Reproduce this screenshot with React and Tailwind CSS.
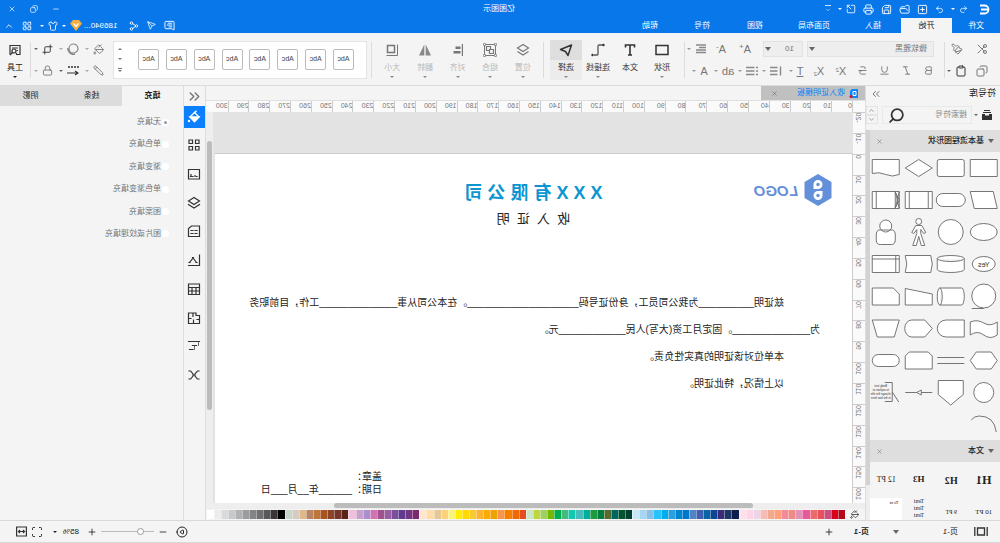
import {
  Bold, ChevronDown, ChevronsLeft, ChevronsRight, ChevronUp, CirclePlay, Clipboard, Copy, Crop, FolderOpen,
  Italic, LayoutGrid, Lock, MessageSquareText, Minus, PaintBucket, Paintbrush, Pencil, Plus, Printer, Redo2,
  Save, Scan, Scissors, Search, Send, Share2, Shirt, SquareArrowOutUpRight, SquarePlus, Strikethrough, Underline,
  Undo2, X,
} from 'lucide-react';

const tabs = ['文件', '开始', '插入', '页面布局', '视图', '符号', '帮助'];
const tabWidths = ['w-12', 'w-[51px]', 'w-14', 'w-[62px]', 'w-14', 'w-[50px]', 'w-[54px]'];

const horizontal = Array.from({ length: 31 }, (_, i) => i * 10);
const vertical = Array.from({ length: 19 }, (_, i) => i * 10 - 20);

const palette = `b5081b d9001b c94f7c e8505b ea6a6e e85a9b e093b5 f08a85 f08c9a ffa07a f0a98f f5bdb5 ead5ea ffd5e5 ffe0ea
0f1f4b 1f3569 3c2a78 0a4691 0a64a8 3f60ae 5283c5 0078cc 0085d0 2ba0dc 00aeef 28c3fa 86bfe8 a5d8f0 c9e8f5
00402f 005530 006660 556b2f 007d40 1c9a3c 00ae9d 48bdbb 14c8b0 46b97c 00ae50 76b900 a0d060 bed63a cae6c8
e84c1e ee6a00 f58000 f59550 f0a200 ffaa00 fcb430 fac832 ffd900 ffee00 fbf27a fdd17a e5c896 ffdcaa ffe6cd
7a2a70 753585 623a92 7a4f9e 985fa2 a0528c cf74b0 a78fd0 c8a0cc efbfdc
5b2317 75352b 8c4526 a85420 bf7638 b88468 deb887 d5cbc0 c5d5ca
000000 3a3536 58585a 707072 848486 9a9c9e b0b2b3 c8c9ca dadada ececec ffffff`.split(/\s+/);

// Outlines drawn on a 32x32 tile
const shapes = [
  'M2.5 7.5h27v17h-27z',
  'M4.5 7.5h23q2 0 2 2v13q0 2-2 2h-23q-2 0-2-2v-13q0-2 2-2z',
  'M16 7.5L29.5 16L16 24.5L2.5 16z',
  'M2.5 7.5h27v14q-7-2-13.5 1t-13.5 0z',
  'M6.5 7.5h23l-4 17h-23z',
  'M8 9.5h16a6.5 6.5 0 0 1 0 13h-16a6.5 6.5 0 0 1 0-13z',
  'M2.5 7.5h27v17h-27zM6.5 7.5v17M25.5 7.5v17',
  'M2.5 7.5h27v17h-27zM6.5 7.5v17M25.5 7.5v17M2.5 7.5l4 17M6.5 7.5l-4 17M2.5 16l4-8M2.5 16l4 8',
  'M2.5 16a13.5 8.5 0 1 0 27 0a13.5 8.5 0 1 0-27 0z',
  'M3.5 16a12.5 12.5 0 1 0 25 0a12.5 12.5 0 1 0-25 0z',
  'M13 5.5a3 3 0 1 0 6 0a3 3 0 1 0-6 0zM13 9.5h6l4 7l-2 1l-3-4v4l4 12h-3.5l-2.5-9l-2.5 9H10l4-12v-4l-3 4l-2-1z',
  'M11 14h-2q-2.5 1-2.5 4v6q0 4.5 4 4.5h11q4 0 4-4.5v-6q0-3-2.5-4h-2zM10 10a6 6 0 1 0 12 0a6 6 0 1 0-12 0z',
  'M4.5 16a11.5 7.5 0 1 0 23 0a11.5 7.5 0 1 0-23 0z',
  'M2.5 10.5a13.5 3 0 0 1 27 0v11a13.5 3 0 0 1-27 0zM2.5 10.5a13.5 3 0 0 0 27 0',
  'M4 7.5h25.5q-3 8.5 0 17H4q-3-8.5 0-17z',
  'M2.5 7.5h27v17h-27zM6 7.5v17M2.5 11h27',
  'M4 16a12 12 0 1 0 24 0a12 12 0 1 0-24 0zM16 28.5h12',
  'M5 8h22a2.5 8.5 0 0 1 0 17H5a2.5 8.5 0 0 1 0-17zM27 8a2.5 8.5 0 0 0 0 17',
  'M2.5 14L29.5 8.5v16.5h-27z',
  'M8.5 8h21v17h-27V14z',
  'M2.5 10q7 5 13.5 1t13.5-1v13q-7-5-13.5 0t-13.5 0z',
  'M2.5 8h18a9 8.5 0 0 1 0 17h-18z',
  'M10 8h13a7 8.5 0 0 1 0 17h-13l-7.5-8.5z',
  'M2.5 8h27l-5 17h-17z',
  'M8.5 8h15l6 8.5l-6 8.5h-15l-6-8.5z',
  'M2.5 13.5h27M2.5 19.5h27',
  'M6.5 8h19l4 4v13h-27V12z',
  'M8.5 10.5h15a6 6 0 0 1 0 12h-15a6 6 0 0 1 0-12z',
  'M6 16.5a10 10 0 1 0 20 0a10 10 0 1 0-20 0z',
  'M3.5 4.5h25v14L16 29L3.5 18.5z',
  'M2.5 16.5h11M18 16.5h11.5M13.5 14l4.5 2.5l-4.5 2.5z',
  'M17 6.5H9.5v19H17M9.5 16L3 26',
  'M3.5 24q2-16 17-16q5 0 8 4',
];

// 14x14 stroked glyphs for the vertical tool strip
const sideTools = [
  ['样式', 'M2 2h3.5v3.5H2zM8.5 2H12v3.5H8.500zM2 8.500h3.500V12H2zM8.500 8.500H12V12H8.500z'],
  ['图片', 'M1.500 2.500h11v9.500h-11zM4 9.500h.5M6 8.500v1M8 9.500h2.500M10 7.500v2'],
  ['图层', 'M7 1.500L12.500 5 7 8.500 1.500 5zM1.500 8.500L7 12l5.500-3.500'],
  ['文档', 'M1.500 2h8l3 2.500V12.500h-11zM4 6.500h2M8 6.500h2M4 9.500h2M8 9.500h2'],
  ['图表', 'M1.500 2v10.500H12.500M4.500 9.500L8 5M8 5l3.500 4.500M7.500 4.500h1M4 9.500h1M11 9.500h1'],
  ['表格', 'M1.500 2h11v10.500h-11zM1.500 5.500h11M1.500 9h11M5 5.500v7M9 5.500v7'],
  ['平面图', 'M1.500 4.500H5V2h7.500v10.500h-11zM1.500 8.500h2.500M7.500 12V9M8 2v3.500M12 7.500h-2'],
  ['甘特图', 'M1.500 2.500h11M4.500 6.500h4M8 10.500h3.500'],
  ['关系图', 'M2 3h1.500M10.500 3H12M2 11h1.500M10.500 11H12M4 3.500L6 6v2l-2 2.500M10 3.500L8 6v2l2 2.500M6 7h2'],
];
const fills = ['无填充', '单色填充', '渐变填充', '单色渐变填充', '图案填充', '图片或纹理填充'];

function Caret({ className = 'border-t-[#666]' }) {
  return <span className={`inline-block shrink-0 border-x-2 border-t-2 border-x-transparent ${className}`} />;
}

function IconButton({ icon: Icon, label, size = 11, caret, className = '', caretClass }) {
  return (
    <button aria-label={label} className={`flex items-center justify-center gap-1 ${className}`}>
      <Icon size={size} />
      {caret && <Caret className={caretClass} />}
    </button>
  );
}

function LetterButton({ children, label, caret }) {
  return (
    <button aria-label={label} className="flex h-4 w-6 items-center justify-center gap-1 text-[11px] leading-3">
      <span>{children}</span>
      {caret && <Caret className="border-t-[#999]" />}
    </button>
  );
}

function LinesButton({ label, d }) {
  return (
    <button aria-label={label} className="flex h-4 w-6 items-center justify-center gap-1">
      <svg width="12" height="12" viewBox="0 0 12 12" fill="none" stroke="#888" strokeWidth="1.4"><path d={d} /></svg>
      <Caret className="border-t-[#999]" />
    </button>
  );
}

function Divider() {
  return <div className="h-9 w-px shrink-0 bg-[#dcdcdc]" />;
}

function SelectIcon() {
  return (
    <svg width="14" height="14" viewBox="0 0 14 14" fill="none" stroke="#333" strokeWidth="1.5">
      <path d="M1.5 2L12.500 6.500 7.500 8.500 5 12.500z" strokeLinejoin="round" />
    </svg>
  );
}

function ConnectorIcon() {
  return (
    <svg width="14" height="14" viewBox="0 0 14 14" fill="none" stroke="#555" strokeWidth="1.3">
      <path d="M2 2h4q1 0 1 1v8q0 1 1 1h3" />
      <circle cx="1.5" cy="2" r="1.2" fill="#333" stroke="none" />
      <circle cx="12.5" cy="12" r="1.2" fill="#333" stroke="none" />
    </svg>
  );
}

function RectIcon() {
  return (
    <svg width="14" height="14" viewBox="0 0 14 14" fill="none" stroke="#333" strokeWidth="1.5">
      <path d="M1 2.500h12v9H1z" />
    </svg>
  );
}

function TextIcon() {
  return (
    <svg width="14" height="14" viewBox="0 0 14 14" fill="none" stroke="#333" strokeWidth="1.6">
      <path d="M2.500 4.500V2h9v2.500M7 2v10M5 12h4" />
    </svg>
  );
}

function GroupIcon() {
  return (
    <svg width="14" height="14" viewBox="0 0 14 14" fill="none" stroke="#777">
      <path d="M1.500 1.500h11v11h-11z" />
      <path d="M3.500 6.500h4v4h-4zM6.500 6V3.500h4v4H8" strokeWidth="1.2" />
      <path d="M.5.5h2v2h-2zM11.500.5h2v2h-2zM.5 11.500h2v2h-2zM11.500 11.500h2v2h-2z" fill="#f4f4f4" strokeWidth=".7" />
    </svg>
  );
}

function AlignIcon() {
  return (
    <svg width="14" height="14" viewBox="0 0 14 14" fill="#777">
      <path d="M2 1h1.2v12H2zM4.500 3.500h5v2.500h-5zM4.500 8h7v2.500h-7z" />
    </svg>
  );
}

function FlipIcon() {
  return (
    <svg width="14" height="14" viewBox="0 0 14 14" fill="#888">
      <path d="M6.300 1.500v11H1zM7.700 1.500v11h5.300z" />
    </svg>
  );
}

function SizeIcon() {
  return (
    <svg width="14" height="14" viewBox="0 0 14 14" fill="none" stroke="#777" strokeWidth="1.5">
      <path d="M4.500 2.500h7v7h-7z" />
      <path d="M1.500 1.500v11h11" strokeWidth="1" />
    </svg>
  );
}

function LayersIcon() {
  return (
    <svg width="14" height="14" viewBox="0 0 14 14" fill="none" stroke="#777" strokeWidth="1.2">
      <path d="M7 1.500L12.500 5 7 8.500 1.500 5zM1.500 8.500L7 12l5.500-3.500" />
    </svg>
  );
}

const insertTools = [
  ['形状', RectIcon, true], ['文本', TextIcon, false], ['连接线', ConnectorIcon, true], ['选择', SelectIcon, true],
];
const arrangeTools = [
  ['位置', LayersIcon], ['组合', GroupIcon], ['对齐', AlignIcon], ['翻转', FlipIcon], ['大小', SizeIcon],
];

function Header() {
  return (
    <header className="bg-[#0877ea] text-white">
      <div className="flex h-[18px] items-center">
        <div className="flex flex-1 items-center gap-[7px] pl-2.5">
          <svg width="11" height="11" viewBox="0 0 11 11" fill="none" stroke="white" strokeWidth="1.8">
            <path d="M10 1.500H5.500a4 4 0 0 0 0 8H10M1.500 5.500H9" />
          </svg>
          <IconButton icon={Undo2} label="撤销" size={9} caret caretClass="border-t-white" className="pl-1" />
          <IconButton icon={Redo2} label="恢复" size={9} />
          <IconButton icon={SquarePlus} label="新建" size={11} />
          <IconButton icon={FolderOpen} label="打开" size={11} />
          <IconButton icon={Save} label="保存" size={11} />
          <IconButton icon={Printer} label="打印" size={11} />
          <IconButton icon={SquareArrowOutUpRight} label="导出" size={10} caret caretClass="border-t-white" />
          <button aria-label="更多" className="flex flex-col items-center border-t border-white/80 pt-px">
            <ChevronDown size={6} />
          </button>
        </div>
        <h1 className="text-[8px]">亿图图示</h1>
        <div className="flex flex-1 items-center justify-end gap-3.5 pr-2">
          <IconButton icon={Minus} label="最小化" size={8} />
          <IconButton icon={Copy} label="还原" size={8} />
          <IconButton icon={X} label="关闭" size={8} />
        </div>
      </div>
      <div className="flex h-[15px] items-stretch text-[8px]">
        <nav className="flex">
          {tabs.map((t, i) => (
            <button key={t} className={`${tabWidths[i]} ${i === 1 ? 'bg-[#f4f4f4] text-[#222]' : ''}`}>{t}</button>
          ))}
        </nav>
        <div className="ml-auto flex items-center gap-2 pr-1">
          <IconButton icon={MessageSquareText} label="消息" size={11} />
          <IconButton icon={Send} label="发送" size={9} />
          <IconButton icon={Share2} label="分享" size={10} />
          <span className="ml-1">186940...</span>
          <svg width="12" height="11" viewBox="0 0 12 11" className="-ml-1.5">
            <path d="M3 0h6l3 3.500L6 11 0 3.500z" fill="#f8ae3c" />
            <path d="M3.500 3.500L6 6.500l2.500-3" fill="none" stroke="white" strokeWidth="1.3" />
          </svg>
          <Caret className="-ml-1 border-t-white" />
          <IconButton icon={Shirt} label="皮肤" size={10} caret caretClass="border-t-white" className="-ml-1" />
          <IconButton icon={LayoutGrid} label="应用" size={10} />
          <IconButton icon={ChevronUp} label="收起" size={10} />
        </div>
      </div>
    </header>
  );
}

function ToolButton({ label, icon: Icon, caret, active, disabled, className }) {
  return (
    <button className={`flex h-10 flex-col items-center text-[8px] leading-3 ${active ? 'bg-[#ececec]' : ''} ${disabled ? 'text-[#b8b8b8]' : 'text-[#333]'} ${className}`}>
      <span className={`flex h-5 w-full items-center justify-center ${active ? 'bg-[#dedede]' : ''}`}><Icon /></span>
      <span className="mt-0.5">{label}</span>
      {caret && <Caret className="mt-0.5 border-t-[#888]" />}
    </button>
  );
}

function Ribbon() {
  return (
    <div className="flex h-[53px] items-center border-b border-[#dcdcdc] pt-px text-[#777]">
      <div className="grid w-[55px] grid-cols-2 gap-y-2.5 pl-1.5">
        <IconButton icon={Scissors} label="剪切" size={12} />
        <IconButton icon={Paintbrush} label="格式刷" size={12} />
        <IconButton icon={Copy} label="复制" size={12} />
        <IconButton icon={Clipboard} label="粘贴" size={12} caret className="text-[#333]" />
      </div>
      <Divider />
      <div className="flex w-[259px] flex-col gap-1.5 pl-1">
        <div className="flex h-4 items-center pl-1.5">
          <div className="relative">
            <select aria-label="字体" className="block h-4 w-[127px] appearance-none border border-[#e2e2e2] bg-[#eee] pl-1.5 text-[8px]">
              <option>微软雅黑</option>
            </select>
            <span className="pointer-events-none absolute top-1.5 right-0.5 border-x-3 border-t-4 border-x-transparent border-t-[#666]" />
          </div>
          <div className="relative ml-1">
            <select aria-label="字号" className="block h-4 w-10 appearance-none border border-[#e2e2e2] bg-[#eee] pl-2 text-[8px]">
              <option>10</option>
            </select>
            <span className="pointer-events-none absolute top-1.5 right-0.5 border-x-3 border-t-4 border-x-transparent border-t-[#666]" />
          </div>
          <div className="ml-1.5 flex">
            <LetterButton label="增大字号">A<sup className="text-[8px]">+</sup></LetterButton>
            <LetterButton label="减小字号">A<sup className="text-[8px]">-</sup></LetterButton>
            <LinesButton label="对齐方式" d="M1 2h10M1 4.500h7M1 7h10M1 9.500h10" />
          </div>
        </div>
        <div className="flex h-4 items-center">
          <IconButton icon={Bold} label="加粗" className="w-[22px]" />
          <IconButton icon={Italic} label="斜体" className="w-[22px]" />
          <IconButton icon={Underline} label="下划线" className="w-[22px]" />
          <IconButton icon={Strikethrough} label="删除线" className="w-[22px]" />
          <button aria-label="上标" className="w-[22px] text-[11px] leading-3">X<sup className="text-[6px]">2</sup></button>
          <button aria-label="下标" className="w-[22px] text-[11px] leading-3">X<sub className="text-[6px]">2</sub></button>
          <LetterButton label="文字方向" caret><u>T</u></LetterButton>
          <LinesButton label="行距" d="M1.500 1.500v9M4.500 2.500H12M4.500 6H12M4.500 9.500H12" />
          <LinesButton label="项目符号" d="M0 2.500h2M3.500 2.500H12M0 6h2M3.500 6H12M0 9.500h2M3.500 9.500H12" />
          <LetterButton label="大小写" caret>ab</LetterButton>
          <LetterButton label="字体颜色" caret>A</LetterButton>
        </div>
      </div>
      <Divider />
      <div className="flex w-[140px] shrink-0 justify-center">
        {insertTools.map(([label, icon, caret]) => (
          <ToolButton key={label} label={label} icon={icon} caret={caret} active={label === '选择'} className="w-8" />
        ))}
      </div>
      <Divider />
      <div className="flex w-[171px] shrink-0 px-1">
        {arrangeTools.map(([label, icon]) => (
          <ToolButton key={label} label={label} icon={icon} caret disabled className="flex-1" />
        ))}
      </div>
      <Divider />
      <div className="mx-1 flex h-[38px] flex-1 items-center border border-[#e4e4e4] bg-white pl-3">
        <div className="flex flex-1 justify-between">
          {Array.from({ length: 8 }, (_, i) => (
            <button key={i} className="h-[21px] w-[21px] rounded-xs border border-[#bbb] text-[7px] text-[#444]">Abc</button>
          ))}
        </div>
        <div className="ml-3 flex w-3 flex-col items-center gap-2">
          <Caret className="rotate-180 border-t-[#777]" />
          <Caret className="border-t-[#777]" />
          <span className="flex flex-col items-center border-t border-[#777] pt-px"><Caret className="border-t-[#777]" /></span>
        </div>
      </div>
      <div className="grid w-[78px] grid-cols-3 gap-y-2.5 pl-0.5">
        <IconButton icon={PaintBucket} label="填充" caret caretClass="border-t-[#aaa]" />
        <button aria-label="阴影" className="flex items-center justify-center gap-1">
          <svg width="12" height="12" viewBox="0 0 12 12" fill="none" stroke="#888" strokeWidth="1.2">
            <circle cx="5.5" cy="5.5" r="4.5" />
            <path d="M11 5a5.500 5.500 0 0 1-7 6" strokeWidth="1.6" />
          </svg>
          <Caret className="border-t-[#aaa]" />
        </button>
        <IconButton icon={Crop} label="裁剪" caret className="text-[#333]" />
        <IconButton icon={Pencil} label="线条" caret caretClass="border-t-[#aaa]" />
        <button aria-label="线型" className="flex items-center justify-center gap-1">
          <svg width="12" height="11" viewBox="0 0 12 11" fill="none" stroke="#333" strokeWidth="1.5">
            <path d="M0 2h12" strokeDasharray="2 1" />
            <path d="M12 8H2M4 6L1 8l3 2" strokeWidth="1.2" />
          </svg>
          <Caret />
        </button>
        <IconButton icon={Lock} label="锁定" caret caretClass="border-t-[#aaa]" />
      </div>
      <Divider />
      <button className="flex h-10 w-[30px] flex-col items-center text-[8px] leading-3 text-[#222]">
        <span className="flex h-5 items-center">
          <svg width="12" height="12" viewBox="0 0 12 12" fill="none" stroke="#333" strokeWidth="1.2">
            <path d="M5 10.500H1v-9h10v9M3 4h6M3 6.500h1.500" />
            <circle cx="7" cy="7" r="2" />
            <path d="M8.500 8.500l2.500 2.500M5.500 8.500L3.500 11" />
          </svg>
        </span>
        <span className="mt-0.5">工具</span>
        <Caret className="mt-0.5" />
      </button>
    </div>
  );
}

function CategoryTitle({ children }) {
  return (
    <div className="flex h-[22px] items-center bg-[#dedede] px-1.5 text-[8px] font-medium text-[#222]">
      <span className="mr-1 border-x-3 border-t-4 border-x-transparent border-t-[#666]" />
      <h3>{children}</h3>
      <button aria-label="关闭" className="ml-auto text-[#777]"><X size={7} /></button>
    </div>
  );
}

function SymbolPanel() {
  return (
    <aside className="flex w-[135px] shrink-0 flex-col border-r border-[#ddd]">
      <div className="flex h-4 items-center justify-between pr-1 pl-1">
        <h2 className="text-[9px] text-[#222]">符号库</h2>
        <IconButton icon={ChevronsRight} label="收起" size={12} className="text-[#777]" />
      </div>
      <div className="flex h-7 items-center pb-0.5 pl-2">
        <button aria-label="库" className="mr-0.5 flex items-center gap-1">
          <svg width="10" height="11" viewBox="0 0 10 11" fill="#333">
            <path d="M2 0h6v1H2zM1 2h8v1H1zM0 4h3v1.500h4V4h3v6H0z" />
          </svg>
          <Caret />
        </button>
        <div className="flex h-[18px] w-[90px] items-center border border-[#e8e8e8]">
          <input aria-label="搜索符号" placeholder="搜索符号" className="w-[66px] bg-transparent pl-1 text-[8px] outline-none placeholder:text-[#888]" />
          <Search size={17} color="#333" strokeWidth={2.5} />
        </div>
        <div className="ml-1 flex flex-col text-[#666]">
          <IconButton icon={ChevronUp} label="上一个" size={7} className="w-3 border border-[#e4e4e4]" />
          <IconButton icon={ChevronDown} label="下一个" size={7} className="w-3 border border-[#e4e4e4]" />
        </div>
      </div>
      <div className="flex min-h-0 flex-1">
        <div className="min-w-0 flex-1 overflow-hidden">
          <CategoryTitle>基本流程图形状</CategoryTitle>
          <div className="grid h-[288px] auto-rows-fr grid-cols-4">
            {shapes.map((d, i) => (
              <svg key={i} viewBox="0 0 32 32" className="h-full w-full" fill={i === 31 || i === 32 ? 'none' : 'white'} stroke="#666" strokeWidth=".9">
                <path d={d} />
                {i === 12 && <text x="16" y="18.5" textAnchor="middle" fontSize="7" fill="#333" stroke="none">Yes</text>}
                {i === 31 && (
                  <text textAnchor="middle" fontSize="3" fill="#333" stroke="none">
                    <tspan x="21" y="11">Body text</tspan>
                    <tspan x="21" y="15">to explain or</tspan>
                    <tspan x="21" y="19">change the title</tspan>
                    <tspan x="21" y="23">in the box here</tspan>
                  </text>
                )}
              </svg>
            ))}
          </div>
          <CategoryTitle>文本</CategoryTitle>
          <div className="grid grid-cols-4 items-center text-center font-['Liberation_Serif','Noto_Sans_CJK_SC',serif] text-[#222]">
            <b className="text-[12px] leading-9">H1</b>
            <b className="text-[10px]">H2</b>
            <b className="text-[9px]">H3</b>
            <span className="text-[8px]">12 PT</span>
            <span className="self-start pt-1.5 text-[7px] leading-4">10 PT</span>
            <span className="self-start pt-1.5 text-[6px] leading-4">9 PT</span>
            <span className="self-start text-[6px] leading-[7px]">Text<br />Text<br />Text</span>
            <span className="h-[22px] self-start bg-white pt-0.5 pl-1 text-left text-[5px] leading-[5px]">Text</span>
          </div>
        </div>
        <div className="w-1 bg-[#eee]"><div className="h-[355px] bg-[#d2d2d2]" /></div>
      </div>
    </aside>
  );
}

function Certificate() {
  return (
    <article className="h-full w-[638px] border-t border-l border-[#ccc] bg-white text-[10px] leading-[13px] text-[#222]">
      <div className="flex items-center gap-1.5 pt-5 pl-5 text-[#6490d9]">
        <svg width="28" height="32" viewBox="0 0 28 32">
          <path d="M14 0l13.500 8v16L14 32 .5 24V8z" fill="#6490d9" />
          <path d="M14 6a4.500 4.500 0 0 1 4.500 4.500V15H14a4.500 4.500 0 0 1 0-9zM9.500 17H14a4.500 4.500 0 1 1-4.500 4.500z" fill="white" />
          <circle cx="14" cy="10.5" r="1.7" fill="#6490d9" />
          <circle cx="14" cy="21.5" r="1.7" fill="#6490d9" />
        </svg>
        <span className="text-[15px] font-bold italic">LOGO</span>
      </div>
      <div className="-mt-[25px] text-center">
        <h2 className="text-[18px] leading-6 font-bold text-[#0b96d1]">X X X 有 限 公 司</h2>
        <h3 className="mt-1 text-[13px] leading-5 whitespace-pre">收  入  证  明</h3>
      </div>
      <div className="pt-[67px] pl-8 whitespace-nowrap">
        <p className="pl-9">兹证明__________为我公司员工，身份证号码____________________。在本公司从事______________工作，目前职务</p>
        <p className="mt-3.5">为______________。固定月工资(大写)人民____________元。</p>
        <p className="mt-3.5 pl-9">本单位对该证明的真实性负责。</p>
        <p className="mt-3.5 pl-9">以上情况，特此证明。</p>
      </div>
      <div className="pt-20 pl-[470px]">
        <p>盖章：</p>
        <p>日期：______年__月___日</p>
      </div>
    </article>
  );
}

function Workspace() {
  return (
    <main className="flex min-w-0 flex-1 flex-col">
      <div className="flex h-[15px] border-b border-[#e0e0e0]">
        <div className="flex w-[104px] items-center bg-[#c0c0c0] pl-1.5">
          <svg width="10" height="9" viewBox="0 0 10 9">
            <path d="M1 0h6l2 2v7H1z" fill="#0a84ff" />
            <path d="M3 2.500h3v4H3z" fill="none" stroke="white" />
            <circle cx="8" cy="7.5" r="1.5" fill="#e01020" />
          </svg>
          <span className="ml-1 text-[8px] text-[#0a84ff]">收入证明模板</span>
          <button aria-label="关闭" className="ml-auto pr-2.5 text-[#666]"><X size={7} /></button>
        </div>
      </div>
      <div className="flex h-[11px] bg-[#fafafa] pr-0.5 pl-3 text-[7px] leading-[9px] text-[#777]">
        {horizontal.map((n) => (
          <span key={n} className="min-w-0 flex-1 border-l border-[#ccc]">{n}</span>
        ))}
      </div>
      <div className="flex min-h-0 flex-1">
        <div className="flex w-3 flex-col bg-[#fafafa] text-[7px] leading-[9px] text-[#777]">
          {vertical.map((n) => (
            <div key={n} className={`flex min-h-0 justify-center overflow-hidden border-t border-[#ccc] ${n === 160 ? 'flex-3' : 'flex-4'}`}>
              <span className="rotate-180 text-right [writing-mode:vertical-rl]">{n}</span>
            </div>
          ))}
        </div>
        <div className="min-w-0 flex-1 overflow-hidden bg-[#e3e3e3] pt-[41px]"><Certificate /></div>
        <div className="w-[7px] bg-[#eee] pt-[29px]"><div className="mx-px h-[269px] rounded-full bg-[#bcbcbc]" /></div>
      </div>
      <div className="h-1.5 bg-[#eee] pr-32 pl-28"><div className="h-[5px] rounded-full bg-[#bcbcbc]" /></div>
      <div className="flex h-[11px] items-center pb-px">
        <button aria-label="填充颜色" className="flex w-5 justify-center text-[#333]"><PaintBucket size={9} /></button>
        {palette.map((c, i) => (
          <button key={i} aria-label={`#${c}`} className="h-[9px] flex-1 border-r border-white/40" style={{ backgroundColor: `#${c}` }} />
        ))}
      </div>
    </main>
  );
}

function FormatPanel() {
  return (
    <aside className="flex w-[206px] shrink-0 border-l border-[#ddd]">
      <div className="flex w-[22px] flex-col items-center border-r border-[#ddd]">
        <IconButton icon={ChevronsLeft} label="收起" size={17} className="h-5 text-[#777]" />
        <button aria-label="填充" className="flex h-[22px] w-full items-center justify-center bg-[#0a80ff]">
          <svg width="14" height="14" viewBox="0 0 14 14" fill="none" stroke="white" strokeWidth="1.3">
            <path d="M6.500 2.500L11 7l-4.500 4.500L2 7z" />
            <path d="M2 7h9l-4.500 4.500z" fill="white" />
            <path d="M4.500.8l2.500 2.500" />
            <circle cx="12" cy="11" r="1.2" fill="white" stroke="none" />
          </svg>
        </button>
        <div className="mt-2.5 flex h-[244px] flex-col justify-between">
          {sideTools.map(([label, d]) => (
            <button key={label} aria-label={label}>
              <svg width="14" height="14" viewBox="0 0 14 14" fill="none" stroke="#333" strokeWidth="1.2" strokeLinecap="square">
                <path d={d} />
                {label === '甘特图' && <path d="M2.500 2.500v4M6.500 6.500v4" strokeWidth=".7" />}
              </svg>
            </button>
          ))}
        </div>
      </div>
      <div className="flex-1">
        <div role="tablist" className="flex h-5 text-[8px] text-[#222]">
          <button role="tab" aria-selected="true" className="flex-1 font-bold">填充</button>
          <button role="tab" className="flex-1 bg-[#dcdcdc]">线条</button>
          <button role="tab" className="flex-1 bg-[#dcdcdc]">阴影</button>
        </div>
        <div className="mt-2.5 flex h-[124px] flex-col justify-between pl-3.5 text-[8px] leading-3 text-[#777]">
          {fills.map((f, i) => (
            <label key={f} className="flex items-center gap-px">
              <input type="radio" name="fill" defaultChecked={i === 0} className="h-[7px] w-[7px] appearance-none rounded-full border-white bg-white checked:border-2 checked:bg-[#999]" />
              {f}
            </label>
          ))}
        </div>
      </div>
    </aside>
  );
}

function StatusBar() {
  return (
    <footer className="flex h-[23px] items-center border-y border-[#d8d8d8] px-4 text-[8px] text-[#222]">
      <svg width="14" height="9" viewBox="0 0 14 9" fill="none" stroke="#333" strokeWidth="1.3" className="-ml-1">
        <path d="M3.500 1h7v7h-7zM.8 0v9M13.200 0v9" />
      </svg>
      <button className="ml-4">页-1</button>
      <button aria-label="页面列表" className="ml-11 border-x-3 border-t-4 border-x-transparent border-t-[#666]" />
      <button className="ml-6 font-bold">页-1</button>
      <IconButton icon={Plus} label="添加页面" size={10} className="ml-5" />
      <div className="ml-auto flex items-center">
        <button aria-label="播放"><CirclePlay size={12} /></button>
        <button aria-label="缩小" className="ml-2"><Minus size={10} /></button>
        <input
          type="range"
          aria-label="缩放"
          defaultValue="22"
          className="mx-1 h-[7px] w-[53px] appearance-none bg-transparent [&::-webkit-slider-runnable-track]:h-px [&::-webkit-slider-runnable-track]:bg-[#bbb] [&::-webkit-slider-thumb]:-mt-[3px] [&::-webkit-slider-thumb]:h-[7px] [&::-webkit-slider-thumb]:w-[7px] [&::-webkit-slider-thumb]:appearance-none [&::-webkit-slider-thumb]:rounded-full [&::-webkit-slider-thumb]:border [&::-webkit-slider-thumb]:border-[#999] [&::-webkit-slider-thumb]:bg-white"
        />
        <button aria-label="放大"><Plus size={10} /></button>
        <span className="ml-2">85%</span>
        <Caret className="ml-1.5" />
        <button aria-label="全屏" className="ml-2.5"><Scan size={12} /></button>
        <button aria-label="适应宽度" className="-mr-1 ml-1">
          <svg width="11" height="11" viewBox="0 0 11 11" fill="none" stroke="#333" strokeWidth="1.2">
            <path d="M.6 1h9.800v9H.6zM2.500 5.500h6M4 4L2.500 5.500 4 7M7 4l1.500 1.500L7 7" />
          </svg>
        </button>
        <span className="w-1" />
      </div>
    </footer>
  );
}

export default function App() {
  return (
    <div className="flex h-screen -scale-x-100 flex-col overflow-hidden bg-[#f4f4f4] font-['Liberation_Sans','Noto_Sans_CJK_SC',sans-serif]">
      <Header />
      <Ribbon />
      <div className="flex min-h-0 flex-1">
        <SymbolPanel />
        <Workspace />
        <FormatPanel />
      </div>
      <StatusBar />
    </div>
  );
}
